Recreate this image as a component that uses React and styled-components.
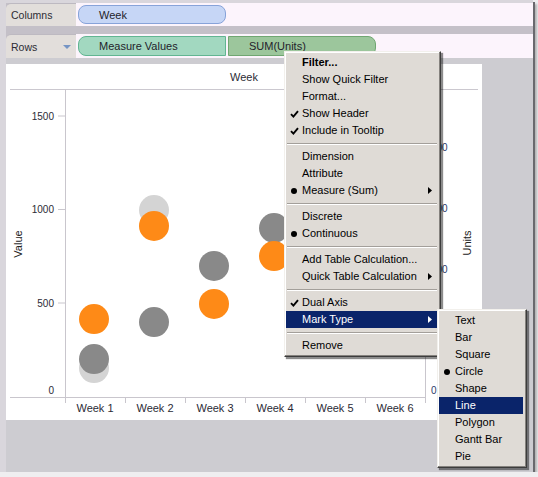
import React from 'react'
import styled, { createGlobalStyle } from 'styled-components'

const GlobalStyle = createGlobalStyle`
  html, body {
    margin: 0;
    padding: 0;
    background: #efeef0;
  }
  body {
    font-family: "Liberation Sans", Arial, sans-serif;
  }
`

const Window = styled.div`
  position: relative;
  width: 533px;
  height: 472px;
  box-sizing: border-box;
  padding: 3px 0 0 6px;
  background: #d9d6dc;
  display: flex;
  flex-direction: column;
  box-shadow: 2px 2px 0 #6a696e, 4px 4px 2px rgba(0, 0, 0, 0.25);
`

const Shelves = styled.div`
  display: flex;
  flex-direction: column;
  gap: 8px;
  background: #c4c0c8;
`

const ShelfRow = styled.div`
  display: flex;
  height: ${p => p.$h}px;
`

const ShelfLabel = styled.div`
  width: 70px;
  box-sizing: border-box;
  padding: 0 5px 0 5px;
  display: flex;
  align-items: center;
  justify-content: space-between;
  background: #e2dedb;
  border-top: 1px solid #bdb9c1;
  border-top-left-radius: 5px;
  font-size: 10.5px;
  color: #2c2c34;
`

const ShelfDrop = styled.div`
  flex: 1;
  display: flex;
  align-items: center;
  gap: 2px;
  padding-left: 2px;
  background: #fcf4fc;
`

const pillColors = {
  blue: { bg: '#c6d6f6', border: '#87a3d9' },
  teal: { bg: '#a2d8c0', border: '#62b592' },
  green: { bg: '#9cc69c', border: '#70a672' },
}

const Pill = styled.div`
  width: 148px;
  height: ${p => p.$h}px;
  box-sizing: border-box;
  padding-left: 20px;
  display: flex;
  align-items: center;
  font-size: 11px;
  color: #23232b;
  background: ${p => pillColors[p.$tone].bg};
  border: 1px solid ${p => pillColors[p.$tone].border};
  border-radius: ${p => p.$radius};
`

const Canvas = styled.div`
  flex: 1;
  padding-top: 6px;
  background: #cdccd1;
`

const ChartPanel = styled.div`
  width: 476px;
  height: 356px;
  background: #ffffff;
`

const Menu = styled.div`
  position: absolute;
  left: ${p => p.$x}px;
  top: ${p => p.$y}px;
  width: ${p => p.$w}px;
  box-sizing: border-box;
  padding: 2px 3px 2px 1px;
  background: #dfdbd6;
  border: 1px solid;
  border-color: #f2f0ec #3c3c3c #3c3c3c #f2f0ec;
  box-shadow: inset -1px -1px 0 #85827e, inset 1px 1px 0 #ffffff,
    2px 2px 1px rgba(0, 0, 0, 0.45);
  font-size: 11px;
  z-index: ${p => p.$z};
`

const Item = styled.div`
  height: 17px;
  display: flex;
  align-items: center;
  color: ${p => (p.$active ? '#ffffff' : '#000000')};
  background: ${p => (p.$active ? '#0a246a' : 'transparent')};
  font-weight: ${p => (p.$bold ? 700 : 400)};
  white-space: nowrap;
`

const MarkCol = styled.span`
  width: 16px;
  flex: none;
  display: flex;
  align-items: center;
  justify-content: center;
`

const ItemLabel = styled.span`
  flex: 1;
  padding-bottom: 1px;
`

const SubArrow = styled.span`
  display: flex;
  margin-right: 5px;
`

const Separator = styled.div`
  height: 9px;
  display: flex;
  align-items: center;
  &::before {
    content: '';
    flex: 1;
    height: 0;
    margin: 0 0 0 1px;
    border-top: 1px solid #a39f9a;
    border-bottom: 1px solid #ffffff;
  }
`

const Dot = styled.span`
  width: 6px;
  height: 6px;
  border-radius: 50%;
  background: ${p => (p.$light ? '#ffffff' : '#000000')};
`

const Check = ({ color }) => (
  <svg width="9" height="8" viewBox="0 0 9 8">
    <path d="M1 4.2 L3.4 6.6 L8 1.2" stroke={color} strokeWidth="1.9" fill="none" />
  </svg>
)

const Arrow = ({ color }) => (
  <svg width="4" height="7" viewBox="0 0 4 7">
    <polygon points="0,0 4,3.5 0,7" fill={color} />
  </svg>
)

const DropCaret = () => (
  <svg width="8" height="4" viewBox="0 0 8 4">
    <polygon points="0,0 8,0 4,4" fill="#7594c4" />
  </svg>
)

const mainMenu = [
  { label: 'Filter...', bold: true },
  { label: 'Show Quick Filter' },
  { label: 'Format...' },
  { label: 'Show Header', mark: 'check' },
  { label: 'Include in Tooltip', mark: 'check' },
  { sep: true },
  { label: 'Dimension' },
  { label: 'Attribute' },
  { label: 'Measure (Sum)', mark: 'dot', sub: true },
  { sep: true },
  { label: 'Discrete' },
  { label: 'Continuous', mark: 'dot' },
  { sep: true },
  { label: 'Add Table Calculation...' },
  { label: 'Quick Table Calculation', sub: true },
  { sep: true },
  { label: 'Dual Axis', mark: 'check' },
  { label: 'Mark Type', sub: true, active: true },
  { sep: true },
  { label: 'Remove' },
]

const markMenu = [
  { label: 'Text' },
  { label: 'Bar' },
  { label: 'Square' },
  { label: 'Circle', mark: 'dot' },
  { label: 'Shape' },
  { label: 'Line', active: true },
  { label: 'Polygon' },
  { label: 'Gantt Bar' },
  { label: 'Pie' },
]

function MenuList({ items, x, y, w, z }) {
  return (
    <Menu $x={x} $y={y} $w={w} $z={z}>
      {items.map((it, i) => {
        if (it.sep) return <Separator key={i} />
        const fg = it.active ? '#ffffff' : '#000000'
        return (
          <Item key={i} $active={it.active} $bold={it.bold}>
            <MarkCol>
              {it.mark === 'check' && <Check color={fg} />}
              {it.mark === 'dot' && <Dot $light={it.active} />}
            </MarkCol>
            <ItemLabel>{it.label}</ItemLabel>
            {it.sub && (
              <SubArrow>
                <Arrow color={fg} />
              </SubArrow>
            )}
          </Item>
        )
      })}
    </Menu>
  )
}

// chart geometry, in panel coordinates
const zeroY = 332.5
const scale = 0.187
const yOf = v => zeroY - v * scale
const axisLeft = 59
const colW = 60
const weeks = ['Week 1', 'Week 2', 'Week 3', 'Week 4', 'Week 5', 'Week 6']

const marks = [
  { week: 0, value: 152, color: '#d4d4d4' },
  { week: 1, value: 997, color: '#d4d4d4' },
  { week: 0, value: 200, color: '#898989' },
  { week: 1, value: 398, color: '#898989' },
  { week: 2, value: 698, color: '#898989' },
  { week: 3, value: 901, color: '#898989' },
  { week: 0, value: 414, color: '#fe8a17' },
  { week: 1, value: 912, color: '#fe8a17' },
  { week: 2, value: 495, color: '#fe8a17' },
  { week: 3, value: 751, color: '#fe8a17' },
]

const leftTicks = [1500, 1000, 500, 0]
const rightTicks = [
  { label: '400', y: 83 },
  { label: '300', y: 144 },
  { label: '200', y: 205 },
  { label: '100', y: 265 },
  { label: '0', y: 326 },
]

const txt = {
  fontFamily: '"Liberation Sans", Arial, sans-serif',
  fill: '#2b2b36',
}

function Chart() {
  const right = axisLeft + colW * weeks.length
  return (
    <svg width="476" height="356" viewBox="0 0 476 356">
      <text x="238" y="17" fontSize="11" textAnchor="middle" style={txt}>Week</text>
      <line x1="4" y1="25.5" x2="472" y2="25.5" stroke="#cbc8cf" />
      <line x1={axisLeft + 0.5} y1="25" x2={axisLeft + 0.5} y2="339" stroke="#c9c6cd" />
      <line x1={right + 0.5} y1="25" x2={right + 0.5} y2="339" stroke="#c9c6cd" />
      <line x1="4" y1="333.5" x2={right} y2="333.5" stroke="#c9c6cd" />

      {leftTicks.map(v => (
        <g key={v}>
          {v > 0 && (
            <line x1="52" y1={yOf(v)} x2={axisLeft} y2={yOf(v)} stroke="#c9c6cd" />
          )}
          <text
            x="48"
            y={v > 0 ? yOf(v) + 3.5 : 329.5}
            fontSize="10"
            textAnchor="end"
            style={txt}
          >
            {v}
          </text>
        </g>
      ))}

      {rightTicks.map(t => (
        <text key={t.label} x="425" y={t.y + 3.5} fontSize="10" style={{ ...txt, fill: '#2a3a6a' }}>
          {t.label}
        </text>
      ))}

      {weeks.map((w, i) => (
        <g key={w}>
          <line
            x1={axisLeft + colW * (i + 1) + 0.5}
            y1="333"
            x2={axisLeft + colW * (i + 1) + 0.5}
            y2="339"
            stroke="#c9c6cd"
          />
          <text x={axisLeft + colW * i + 30} y="348" fontSize="11" textAnchor="middle" style={txt}>
            {w}
          </text>
        </g>
      ))}

      {marks.map((m, i) => (
        <circle key={i} cx={axisLeft + colW * m.week + 29} cy={yOf(m.value)} r="15" fill={m.color} />
      ))}

      <text
        x="16"
        y="180"
        fontSize="11"
        textAnchor="middle"
        transform="rotate(-90 16 180)"
        style={{ ...txt, fill: '#222' }}
      >
        Value
      </text>
      <text
        x="465"
        y="179"
        fontSize="11"
        textAnchor="middle"
        transform="rotate(-90 465 179)"
        style={{ ...txt, fill: '#222' }}
      >
        Units
      </text>
    </svg>
  )
}

export default function App() {
  return (
    <>
      <GlobalStyle />
      <Window>
        <Shelves>
          <ShelfRow $h={23}>
            <ShelfLabel>Columns</ShelfLabel>
            <ShelfDrop>
              <Pill $tone="blue" $h={19} $radius="8px">Week</Pill>
            </ShelfDrop>
          </ShelfRow>
          <ShelfRow $h={24}>
            <ShelfLabel>
              Rows
              <DropCaret />
            </ShelfLabel>
            <ShelfDrop>
              <Pill $tone="teal" $h={20} $radius="8px 0 0 8px">Measure Values</Pill>
              <Pill $tone="green" $h={20} $radius="0 8px 8px 0">SUM(Units)</Pill>
            </ShelfDrop>
          </ShelfRow>
        </Shelves>
        <Canvas>
          <ChartPanel>
            <Chart />
          </ChartPanel>
        </Canvas>
        <MenuList items={mainMenu} x={284} y={51} w={157} z={2} />
        <MenuList items={markMenu} x={437} y={309} w={90} z={3} />
      </Window>
    </>
  )
}
